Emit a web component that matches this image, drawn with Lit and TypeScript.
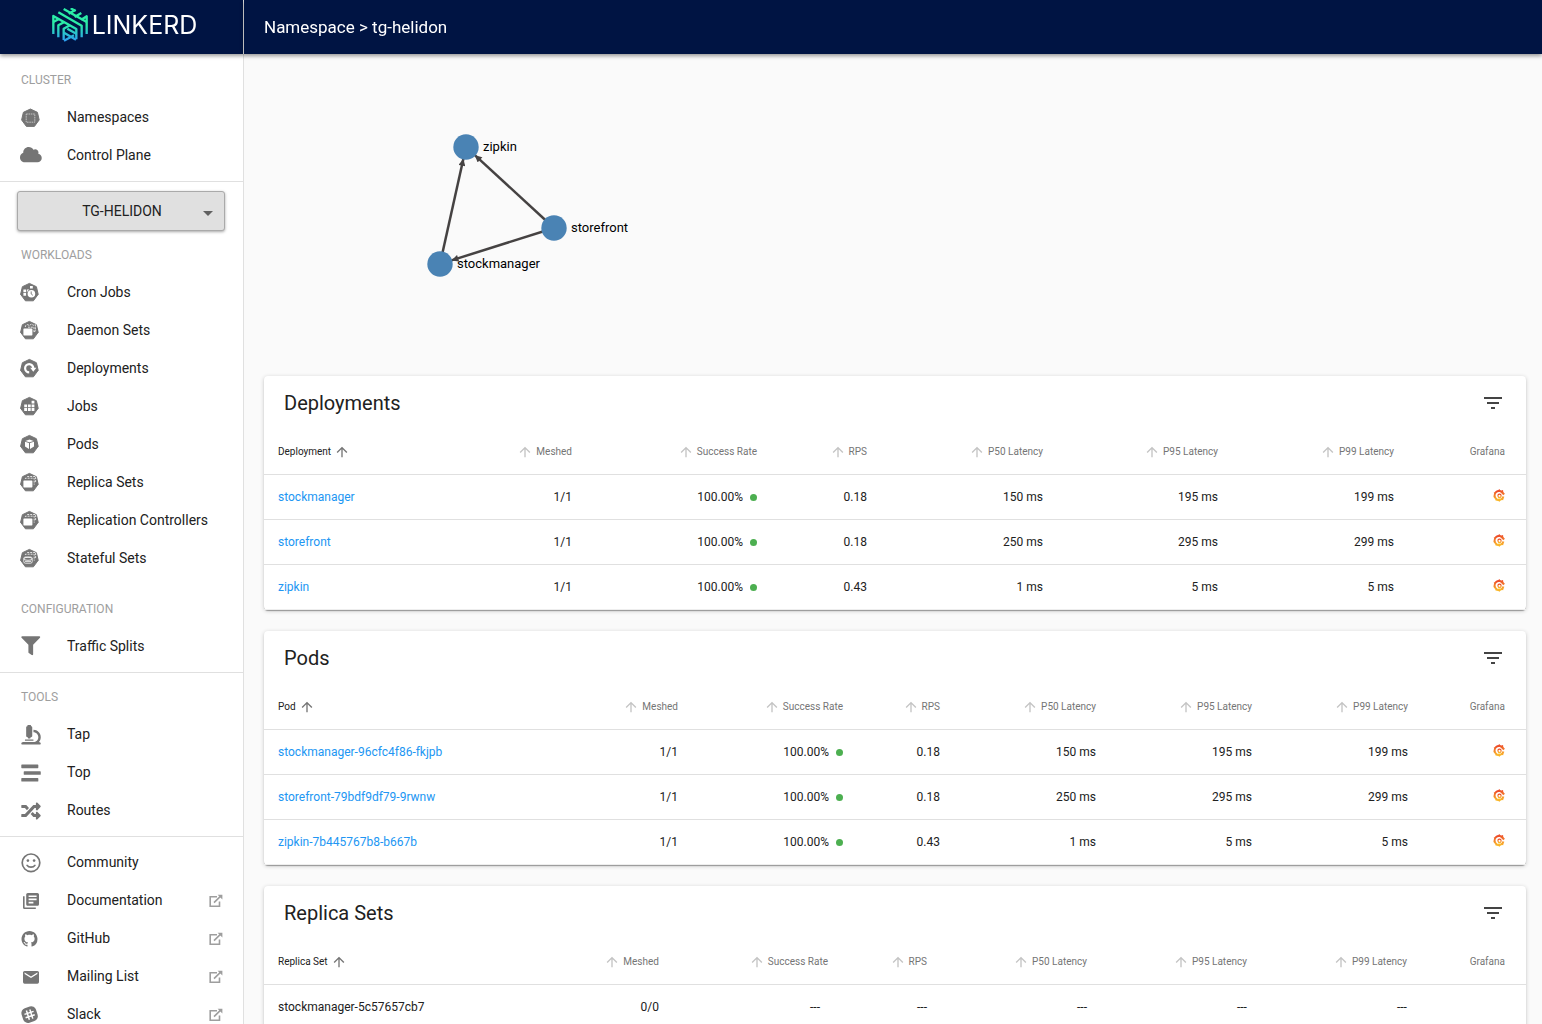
import { LitElement, html, css, svg, nothing } from "lit";
import { customElement, property } from "lit/decorators.js";

const heptagon = svg`<path d="M10.4 2.4 L17.4 5.7 L19.2 13.3 L14.4 19.8 H6.4 L1.6 13.3 L3.4 5.7 Z" stroke="currentColor" stroke-width="1" stroke-linejoin="round"/>`;

const resourceIcon = (glyph: unknown) => svg`<g transform="translate(0 1)">${heptagon}${glyph}</g>`;

const stackedBoxes = svg`
  <rect x="4.4" y="9.4" width="9" height="7" rx=".7" fill="#fff"/>
  <path d="M6.4 8V7.2h8.800v6.400M8.200 5.500h8.400v6.200" fill="none" stroke="#fff" stroke-width=".8" stroke-dasharray="2 1"/>`;

const ICONS = {
  namespaces: svg`
    <g transform="translate(1 1.6)">${heptagon}
    <rect x="6.2" y="7.4" width="8.6" height="8.2" fill="none" stroke="#d4d4d4" stroke-width=".8" stroke-dasharray="1.6 .7"/></g>`,
  cloud: svg`<path transform="translate(1 3) scale(.034)" d="M537.6 226.6c4.1-10.7 6.4-22.4 6.4-34.6 0-53-43-96-96-96-19.7 0-38.1 6-53.3 16.2C367 64.2 315.3 32 256 32c-88.4 0-160 71.6-160 160 0 2.7.1 5.4.2 8.1C40.2 219.8 0 273.2 0 336c0 79.5 64.5 144 144 144h368c70.7 0 128-57.3 128-128 0-61.9-44-113.6-102.4-125.4z"/>`,
  cronJobs: resourceIcon(svg`
    <path d="M4.4 8.6h2.7v2.7H4.4zM7.9 8.6h2.2v2.7H7.9zM4.4 12h2.7v2.7H4.4zM11 5h2.8v2.6H11z" fill="#fff"/>
    <circle cx="12.4" cy="12.8" r="4.6" fill="#757575"/>
    <circle cx="12.4" cy="12.8" r="3.8" fill="#fff"/><path d="M12.2 10.4v2.6l1.7 1.3" fill="none" stroke="#757575" stroke-width=".9"/>`),
  daemonSets: resourceIcon(svg`
    <rect x="4.4" y="9.4" width="9" height="7" rx=".7" fill="#fff"/>
    <path d="M6.4 8V6.8l2-1.200 2 .8 2-1.200 2 1 2-.6v6.200l-1.400 1.600V8.200H9" fill="none" stroke="#fff" stroke-width=".8" stroke-dasharray="2.200 .8"/>`),
  deployments: resourceIcon(svg`
    <path d="M10.2 15.4a4.1 4.1 0 1 1 4.1-4.1" fill="none" stroke="#fff" stroke-width="2.2"/>
    <path d="M11.2 10.8h6.2l-3.1 4z" fill="#fff"/>`),
  jobs: resourceIcon(svg`
    <path d="M5.2 9.4h2.8v2.8H5.2zM8.9 9.4h2.8v2.8H8.9zM12.6 9.4h2.8v2.8h-2.8zM5.2 13.1h2.8v2.8H5.2zM8.9 13.1h2.8v2.8H8.9zM12.6 13.1h2.8v2.8h-2.8zM12.6 5.7h2.8v2.8h-2.8z" fill="#fff"/>`),
  pods: resourceIcon(svg`
    <path d="M10.5 6.6l4.2 1.3-4.2 1.3-4.2-1.3zM6 8.7l4 1.3v6l-4-2.4zM15 8.7L11 10v6l4-2.4z" fill="#fff"/>`),
  replicas: resourceIcon(stackedBoxes),
  statefulSets: resourceIcon(svg`
    <g fill="none" stroke="#fff" stroke-width=".8"><rect x="4.8" y="10" width="8.4" height="6.2" rx="1.6"/>
    <ellipse cx="9" cy="11.8" rx="4" ry="1.5"/><path d="M6 14.4h6"/>
    <path d="M6.4 8V7.2h8.800v6.400M8.200 5.500h8.400v6.200" stroke-dasharray="2 1"/></g>`),
  filter: svg`<path transform="translate(2.3 2.3) scale(.037)" d="M487.976 0H24.028C2.71 0-8.047 25.866 7.058 40.971L192 225.941V432c0 7.831 3.821 15.17 10.237 19.662l80 55.98C298.02 518.69 320 507.493 320 487.98V225.941l184.947-184.97C520.021 25.896 509.338 0 487.976 0z"/>`,
  tap: svg`<path transform="translate(2.3 3) scale(.038)" d="M160 320h12v16c0 8.84 7.16 16 16 16h40c8.84 0 16-7.16 16-16v-16h12c17.67 0 32-14.33 32-32V64c0-17.67-14.33-32-32-32V16c0-8.84-7.16-16-16-16h-64c-8.84 0-16 7.16-16 16v16c-17.67 0-32 14.33-32 32v224c0 17.67 14.33 32 32 32zm304 128h-1.29C493.24 413.99 512 369.2 512 320c0-105.88-86.12-192-192-192v64c70.58 0 128 57.42 128 128s-57.42 128-128 128H48c-26.51 0-48 21.49-48 48 0 8.84 7.16 16 16 16h480c8.84 0 16-7.16 16-16 0-26.51-21.49-48-48-48zm-360-32h208c4.42 0 8-3.58 8-8v-16c0-4.42-3.58-8-8-8H104c-4.42 0-8 3.58-8 8v16c0 4.42 3.58 8 8 8z"/>`,
  top: svg`<path transform="translate(2.3 3.3) scale(.038)" d="M16 128h416c8.84 0 16-7.16 16-16V48c0-8.84-7.16-16-16-16H16C7.16 32 0 39.16 0 48v64c0 8.84 7.16 16 16 16zm480 80H80c-8.84 0-16 7.16-16 16v64c0 8.84 7.16 16 16 16h416c8.84 0 16-7.16 16-16v-64c0-8.84-7.16-16-16-16zm-64 176H16c-8.84 0-16 7.16-16 16v64c0 8.84 7.16 16 16 16h416c8.84 0 16-7.16 16-16v-64c0-8.84-7.16-16-16-16z"/>`,
  routes: svg`<path transform="translate(2.3 3.3) scale(.038)" d="M504.971 359.029c9.373 9.373 9.373 24.569 0 33.941l-80 79.984c-15.01 15.01-40.971 4.49-40.971-16.971V416h-58.785a12.004 12.004 0 0 1-8.773-3.812l-70.556-75.596 53.333-57.143L352 336h32v-39.981c0-21.438 25.943-31.998 40.971-16.971l80 79.981zM12 176h84l52.781 56.551 53.333-57.143-70.556-75.596A11.999 11.999 0 0 0 122.785 96H12c-6.627 0-12 5.373-12 12v56c0 6.627 5.373 12 12 12zm372 0v39.984c0 21.46 25.961 31.98 40.971 16.971l80-79.984c9.373-9.373 9.373-24.569 0-33.941l-80-79.981C409.943 24.021 384 34.582 384 56.019V96h-58.785a12.004 12.004 0 0 0-8.773 3.812L96 336H12c-6.627 0-12 5.373-12 12v56c0 6.627 5.373 12 12 12h110.785c3.326 0 6.503-1.381 8.773-3.812L352 176h32z"/>`,
  community: svg`<circle cx="12" cy="12.8" r="8.8" fill="none" stroke="currentColor" stroke-width="1.7"/>
    <circle cx="8.9" cy="10.6" r="1.3"/><circle cx="15.1" cy="10.6" r="1.3"/>
    <path d="M8.1 15.4c1.6 2.4 6.2 2.4 7.8 0" fill="none" stroke="currentColor" stroke-width="1.7" stroke-linecap="round"/>`,
  docs: svg`<path transform="translate(2.4 3.4) scale(.8)" d="M4 6H2v14c0 1.1.9 2 2 2h14v-2H4V6zm16-4H8c-1.1 0-2 .9-2 2v12c0 1.1.9 2 2 2h12c1.1 0 2-.9 2-2V4c0-1.1-.9-2-2-2zm-1 9H9V9h10v2zm-4 4H9v-2h6v2zm4-8H9V5h10v2z"/>`,
  github: svg`<path transform="translate(2.5 5)" d="M8 0C3.58 0 0 3.58 0 8c0 3.54 2.29 6.53 5.47 7.59.4.07.55-.17.55-.38 0-.19-.01-.82-.01-1.49-2.01.37-2.53-.49-2.69-.94-.09-.23-.48-.94-.82-1.13-.28-.15-.68-.52-.01-.53.63-.01 1.08.58 1.23.82.72 1.21 1.87.87 2.33.66.07-.52.28-.87.51-1.07-1.78-.2-3.64-.89-3.64-3.95 0-.87.31-1.59.82-2.15-.08-.2-.36-1.02.08-2.12 0 0 .67-.21 2.2.82.64-.18 1.32-.27 2-.27.68 0 1.36.09 2 .27 1.53-1.04 2.2-.82 2.2-.82.44 1.1.16 1.92.08 2.12.51.56.82 1.27.82 2.15 0 3.07-1.87 3.75-3.65 3.95.29.25.54.73.54 1.48 0 1.07-.01 1.93-.01 2.2 0 .21.15.46.55.38A8.013 8.013 0 0016 8c0-4.42-3.58-8-8-8z"/>`,
  mail: svg`<path transform="translate(2.4 3.7) scale(.8)" d="M20 4H4c-1.1 0-1.99.9-1.99 2L2 18c0 1.1.9 2 2 2h16c1.1 0 2-.9 2-2V6c0-1.1-.9-2-2-2zm0 4l-8 5-8-5V6l8 5 8-5v2z"/>`,
  slack: svg`<g transform="translate(10.6 12.6) rotate(-18)"><rect x="-7.6" y="-7.6" width="15.2" height="15.2" rx="5"/>
    <path d="M-1.800 -4.8V4.8M1.800 -4.8V4.8M-4.8 -1.800H4.8M-4.8 1.800H4.8" stroke="#fff" stroke-width="1.5" fill="none"/></g>`,
};

type IconName = keyof typeof ICONS;
interface NavEntry { label: string; icon: IconName; external?: boolean }

const CLUSTER: NavEntry[] = [
  { label: "Namespaces", icon: "namespaces" },
  { label: "Control Plane", icon: "cloud" },
];
const WORKLOADS: NavEntry[] = [
  { label: "Cron Jobs", icon: "cronJobs" },
  { label: "Daemon Sets", icon: "daemonSets" },
  { label: "Deployments", icon: "deployments" },
  { label: "Jobs", icon: "jobs" },
  { label: "Pods", icon: "pods" },
  { label: "Replica Sets", icon: "replicas" },
  { label: "Replication Controllers", icon: "replicas" },
  { label: "Stateful Sets", icon: "statefulSets" },
];
const CONFIGURATION: NavEntry[] = [{ label: "Traffic Splits", icon: "filter" }];
const TOOLS: NavEntry[] = [
  { label: "Tap", icon: "tap" },
  { label: "Top", icon: "top" },
  { label: "Routes", icon: "routes" },
];
const LINKS: NavEntry[] = [
  { label: "Community", icon: "community" },
  { label: "Documentation", icon: "docs", external: true },
  { label: "GitHub", icon: "github", external: true },
  { label: "Mailing List", icon: "mail", external: true },
  { label: "Slack", icon: "slack", external: true },
];

interface Metric {
  name: string;
  meshed: string;
  rate?: string;
  rps?: string;
  p50?: string;
  p95?: string;
  p99?: string;
}
interface Resource { title: string; kind: string; columns: number[]; rows: Metric[] }

const RESOURCES: Resource[] = [
  {
    title: "Deployments",
    kind: "Deployment",
    columns: [229, 100, 185, 110, 176, 175, 176, 111],
    rows: [
      { name: "stockmanager", meshed: "1/1", rate: "100.00%", rps: "0.18", p50: "150 ms", p95: "195 ms", p99: "199 ms" },
      { name: "storefront", meshed: "1/1", rate: "100.00%", rps: "0.18", p50: "250 ms", p95: "295 ms", p99: "299 ms" },
      { name: "zipkin", meshed: "1/1", rate: "100.00%", rps: "0.43", p50: "1 ms", p95: "5 ms", p99: "5 ms" },
    ],
  },
  {
    title: "Pods",
    kind: "Pod",
    columns: [335, 100, 165, 97, 156, 156, 156, 97],
    rows: [
      { name: "stockmanager-96cfc4f86-fkjpb", meshed: "1/1", rate: "100.00%", rps: "0.18", p50: "150 ms", p95: "195 ms", p99: "199 ms" },
      { name: "storefront-79bdf9df79-9rwnw", meshed: "1/1", rate: "100.00%", rps: "0.18", p50: "250 ms", p95: "295 ms", p99: "299 ms" },
      { name: "zipkin-7b445767b8-b667b", meshed: "1/1", rate: "100.00%", rps: "0.43", p50: "1 ms", p95: "5 ms", p99: "5 ms" },
    ],
  },
  {
    title: "Replica Sets",
    kind: "Replica Set",
    columns: [316, 100, 169, 99, 160, 160, 160, 98],
    rows: [{ name: "stockmanager-5c57657cb7", meshed: "0/0" }],
  },
];

const sortArrow = html`<svg class="arrow" viewBox="0 0 24 24" aria-hidden="true"><path d="M4 12l1.41 1.41L11 7.83V20h2V7.83l5.58 5.59L20 12l-8-8-8 8z"/></svg>`;

const grafanaIcon = html`<svg class="grafana" viewBox="0 0 24 26" aria-hidden="true">
  <defs><linearGradient id="flame" x1="0" y1="0" x2="0" y2="1"><stop offset="0" stop-color="#ec4429"/><stop offset="1" stop-color="#fbc02d"/></linearGradient></defs>
  <path fill="none" stroke="url(#flame)" stroke-width="4" d="M20.400 9.500A9 9 0 1 0 20.800 15.200"/>
  <path fill="url(#flame)" d="M9.500 3.500L12.500 0l2.800 3.400 4.800-1.600.600 5L24 9.400l-3.500 3.200-4.500-5.600zM6.500 6.500L1.400 7l2 4.200zM4 12L.4 15.800l4.200 2.400zM5.500 18l-.6 5 4.600-.6zM9.400 22l3.200 3.800 2.600-3.800zM15.500 21.600l5 .8.400-5z"/>
  <path fill="none" stroke="url(#flame)" stroke-width="2.400" stroke-linecap="round" d="M12.800 16.800a3.200 3.200 0 1 1 3.400-3.600c.2 3.400-2.600 5-5 4.600"/>
</svg>`;

@customElement("metrics-card")
export class MetricsCard extends LitElement {
  @property({ attribute: false }) resource!: Resource;

  static styles = css`
    :host { display: block; background: #fff; border-radius: 4px; box-shadow: 0 1px 4px rgba(0, 0, 0, .2), 0 1px 1px rgba(0, 0, 0, .14), 0 2px 1px -1px rgba(0, 0, 0, .2); }
    .head { display: flex; align-items: center; justify-content: space-between; height: 54px; padding: 0 21px 0 20px; }
    .title { margin: 0; font-size: 20px; font-weight: 400; line-height: 32px; }
    button { padding: 0; border: 0; background: none; font: inherit; color: inherit; cursor: pointer; }
    .filter { display: flex; }
    .filter svg { width: 24px; height: 24px; fill: #444; }
    table { width: 100%; table-layout: fixed; border-collapse: separate; border-spacing: 0; }
    th, td { box-sizing: border-box; height: 45px; padding: 0 21px 0 14px; border-bottom: 1px solid #e0e0e0; text-align: right; white-space: nowrap; font-size: 12px; font-weight: 400; line-height: 16px; }
    th { padding-left: 0; font-size: 10px; color: #757575; }
    th:first-child, td:first-child { padding-left: 14px; padding-right: 4px; text-align: left; }
    th:first-child { color: #212121; }
    tr:last-child td { border-bottom-color: #eee; }
    .sort { display: inline-flex; align-items: center; gap: 3px; vertical-align: middle; }
    .arrow { width: 16px; height: 16px; fill: #c4c4c4; }
    th:first-child .arrow { fill: #757575; }
    a { color: #2196f3; text-decoration: none; }
    .rate { display: inline-flex; align-items: center; gap: 7px; }
    .dot { width: 7px; height: 7px; border-radius: 50%; background: #4caf50; }
    .none { padding-right: 8px; }
    .grafana { display: inline-block; width: 12px; height: 13px; margin-bottom: 4px; vertical-align: middle; }
  `;

  render() {
    const { title, kind, columns, rows } = this.resource;
    const total = columns.reduce((sum, w) => sum + w, 0);
    const metrics = ["Meshed", "Success Rate", "RPS", "P50 Latency", "P95 Latency", "P99 Latency"];
    return html`
      <div class="head">
        <h2 class="title">${title}</h2>
        <button class="filter" aria-label="Filter ${title}">
          <svg viewBox="0 0 24 24" aria-hidden="true"><path d="M10 18h4v-2h-4v2zM3 6v2h18V6H3zm3 7h12v-2H6v2z"/></svg>
        </button>
      </div>
      <table>
        <colgroup>${columns.map((w) => html`<col style="width:${(w / total) * 100}%">`)}</colgroup>
        <thead>
          <tr>
            <th><button class="sort">${kind}${sortArrow}</button></th>
            ${metrics.map((m) => html`<th><button class="sort">${sortArrow}${m}</button></th>`)}
            <th>Grafana</th>
          </tr>
        </thead>
        <tbody>
          ${rows.map((r) => html`
            <tr>
              <td>${r.rate ? html`<a href="#${r.name}">${r.name}</a>` : r.name}</td>
              <td>${r.meshed}</td>
              <td>${r.rate ? html`<span class="rate">${r.rate}<span class="dot"></span></span>` : html`<span class="none">---</span>`}</td>
              <td>${r.rps ?? "---"}</td>
              <td>${r.p50 ?? "---"}</td>
              <td>${r.p95 ?? "---"}</td>
              <td>${r.p99 ?? "---"}</td>
              <td>${r.rate ? html`<a href="#grafana-${r.name}" aria-label="Grafana: ${r.name}">${grafanaIcon}</a>` : nothing}</td>
            </tr>`)}
        </tbody>
      </table>
    `;
  }
}

@customElement("app-root")
export class AppRoot extends LitElement {
  static styles = css`
    :host { display: grid; grid-template: 54px minmax(0, 1fr) / 244px minmax(0, 1fr); height: 100vh; overflow: hidden; background: #fafafa; color: #212121; font-family: Roboto, "Liberation Sans", sans-serif; font-size: 14px; }
    .brand, .topbar { z-index: 1; display: flex; align-items: center; box-sizing: border-box; background: #001443; color: #fff; box-shadow: 0 2px 4px rgba(0, 0, 0, .4); }
    .brand { justify-content: center; gap: 4px; padding-bottom: 5px; padding-left: 6px; border-right: 1px solid #e0e0e0; text-decoration: none; }
    .mark { width: 36px; height: 34px; }
    .wordmark { font-family: Inter, sans-serif; font-size: 25px; font-weight: 400; line-height: 32px; }
    .topbar { padding: 0 20px; }
    .crumbs { margin: 0; font-size: 17px; font-weight: 400; line-height: 24px; }
    nav { overflow-y: auto; scrollbar-width: none; box-sizing: border-box; border-right: 1px solid #e0e0e0; background: #fff; }
    .group { border-bottom: 1px solid #e0e0e0; }
    .cluster { padding: 7px 0; }
    .resources { padding: 9px 0 7px; }
    .tools { padding: 5px 0 7px; }
    .links { padding: 6px 0; border-bottom: 0; }
    .label { margin: 0; padding: 2px 21px 0; font-size: 12px; font-weight: 400; line-height: 35px; color: #9e9e9e; }
    ul { margin: 0; padding: 0; list-style: none; }
    .spaced { margin-bottom: 13px; }
    .item { display: flex; align-items: center; height: 38px; padding: 0 20px 0 19px; color: #212121; text-decoration: none; }
    .icon { flex: none; width: 24px; height: 24px; margin-right: 24px; fill: currentColor; color: #757575; }
    .text { flex: 1; line-height: 20px; }
    .out { width: 14px; height: 14px; margin-top: 2px; color: #9e9e9e; }
    .picker { display: grid; align-items: center; margin: 0 18px 5px 17px; }
    .picker > * { grid-area: 1 / 1; }
    select { height: 40px; padding: 0 14px 0 16px; border: 1px solid #aaa; border-radius: 3px; appearance: none; background: #e0e0e0; box-shadow: 0 1px 3px rgba(0, 0, 0, .35); font: inherit; color: #212121; text-align: center; text-align-last: center; }
    .caret { justify-self: end; width: 10px; height: 5px; margin-right: 12px; margin-top: 4px; fill: #616161; pointer-events: none; }
    main { overflow-y: auto; scrollbar-width: none; padding: 0 16px 20px 20px; }
    .graph { display: block; width: 100%; height: 322px; }
    .graph text { font-size: 13px; fill: #000; }
    .cards { display: grid; gap: 21px; }
  `;

  private list(entries: NavEntry[], extra = "") {
    return html`<ul class=${extra}>
      ${entries.map((e) => html`
        <li><a class="item" href="#${e.icon}">
          <svg class="icon" viewBox="0 0 24 24" aria-hidden="true">${ICONS[e.icon]}</svg>
          <span class="text">${e.label}</span>
          ${e.external ? html`<svg class="out" viewBox="0 0 14 14" aria-hidden="true">
            <path d="M8 2.7H1.2v9.5h9.3V7.4M5 8.6L11.4 2.4" fill="none" stroke="currentColor" stroke-width="1.6"/>
            <path d="M8.6 .8H13.4V5.6z" fill="currentColor"/></svg>` : nothing}
        </a></li>`)}
    </ul>`;
  }

  private graph() {
    const nodes = [
      { name: "zipkin", x: 202, y: 93 },
      { name: "storefront", x: 290, y: 174 },
      { name: "stockmanager", x: 176, y: 210 },
    ];
    const edges = [[1, 0], [1, 2], [2, 0]];
    return html`<svg class="graph" role="img" aria-label="Service graph">
      <defs><marker id="head" viewBox="0 0 10 10" refX="10" refY="5" markerWidth="8" markerHeight="7" markerUnits="userSpaceOnUse" orient="auto"><path d="M0 0L10 5L0 10z" fill="#454242"/></marker></defs>
      ${edges.map(([a, b]) => {
        const s = nodes[a], t = nodes[b];
        const len = Math.hypot(t.x - s.x, t.y - s.y);
        const k = (len - 12) / len;
        return svg`<line x1=${s.x} y1=${s.y} x2=${s.x + (t.x - s.x) * k} y2=${s.y + (t.y - s.y) * k} stroke="#454242" stroke-width="2.5" marker-end="url(#head)"/>`;
      })}
      ${nodes.map((n) => svg`<circle cx=${n.x} cy=${n.y} r="12.7" fill="#4a83b4"/><text x=${n.x + 17} y=${n.y + 4}>${n.name}</text>`)}
    </svg>`;
  }

  render() {
    return html`
      <a class="brand" href="#home" aria-label="Linkerd">
        <svg class="mark" viewBox="0 0 108 102" aria-hidden="true">
          <defs><linearGradient id="sea" gradientUnits="userSpaceOnUse" x1="0" y1="0" x2="0" y2="100"><stop offset="0" stop-color="#2beda7"/><stop offset=".5" stop-color="#2beda7"/><stop offset="1" stop-color="#2c9cf2"/></linearGradient></defs>
          <g fill="none" stroke="url(#sea)" stroke-width="7" stroke-linejoin="round">
            <path d="M4 78V24L73 63V94M19 13L89 53V88M35 3L104 42"/>
            <path d="M4 42L21 33M19 88V52L37 42M35 96V62L54 52"/>
            <path d="M56 1l15 8M50 17l21-12M68 27l20-12M88 35L104 25V78"/>
            <path d="M46 62l28 16M36 74l36 21M36 98l30-16"/>
          </g>
        </svg>
        <span class="wordmark">LINKERD</span>
      </a>
      <header class="topbar"><h1 class="crumbs">Namespace &gt; tg-helidon</h1></header>
      <nav aria-label="Main">
        <div class="group cluster">
          <h2 class="label">CLUSTER</h2>
          ${this.list(CLUSTER)}
        </div>
        <div class="group resources">
          <div class="picker">
            <select aria-label="Namespace"><option>TG-HELIDON</option></select>
            <svg class="caret" viewBox="0 0 10 5" aria-hidden="true"><path d="M0 0h10L5 5z"/></svg>
          </div>
          <h2 class="label">WORKLOADS</h2>
          ${this.list(WORKLOADS, "spaced")}
          <h2 class="label">CONFIGURATION</h2>
          ${this.list(CONFIGURATION)}
        </div>
        <div class="group tools">
          <h2 class="label">TOOLS</h2>
          ${this.list(TOOLS)}
        </div>
        <div class="group links">${this.list(LINKS)}</div>
      </nav>
      <main>
        ${this.graph()}
        <div class="cards">
          ${RESOURCES.map((r) => html`<metrics-card .resource=${r}></metrics-card>`)}
        </div>
      </main>
    `;
  }
}
